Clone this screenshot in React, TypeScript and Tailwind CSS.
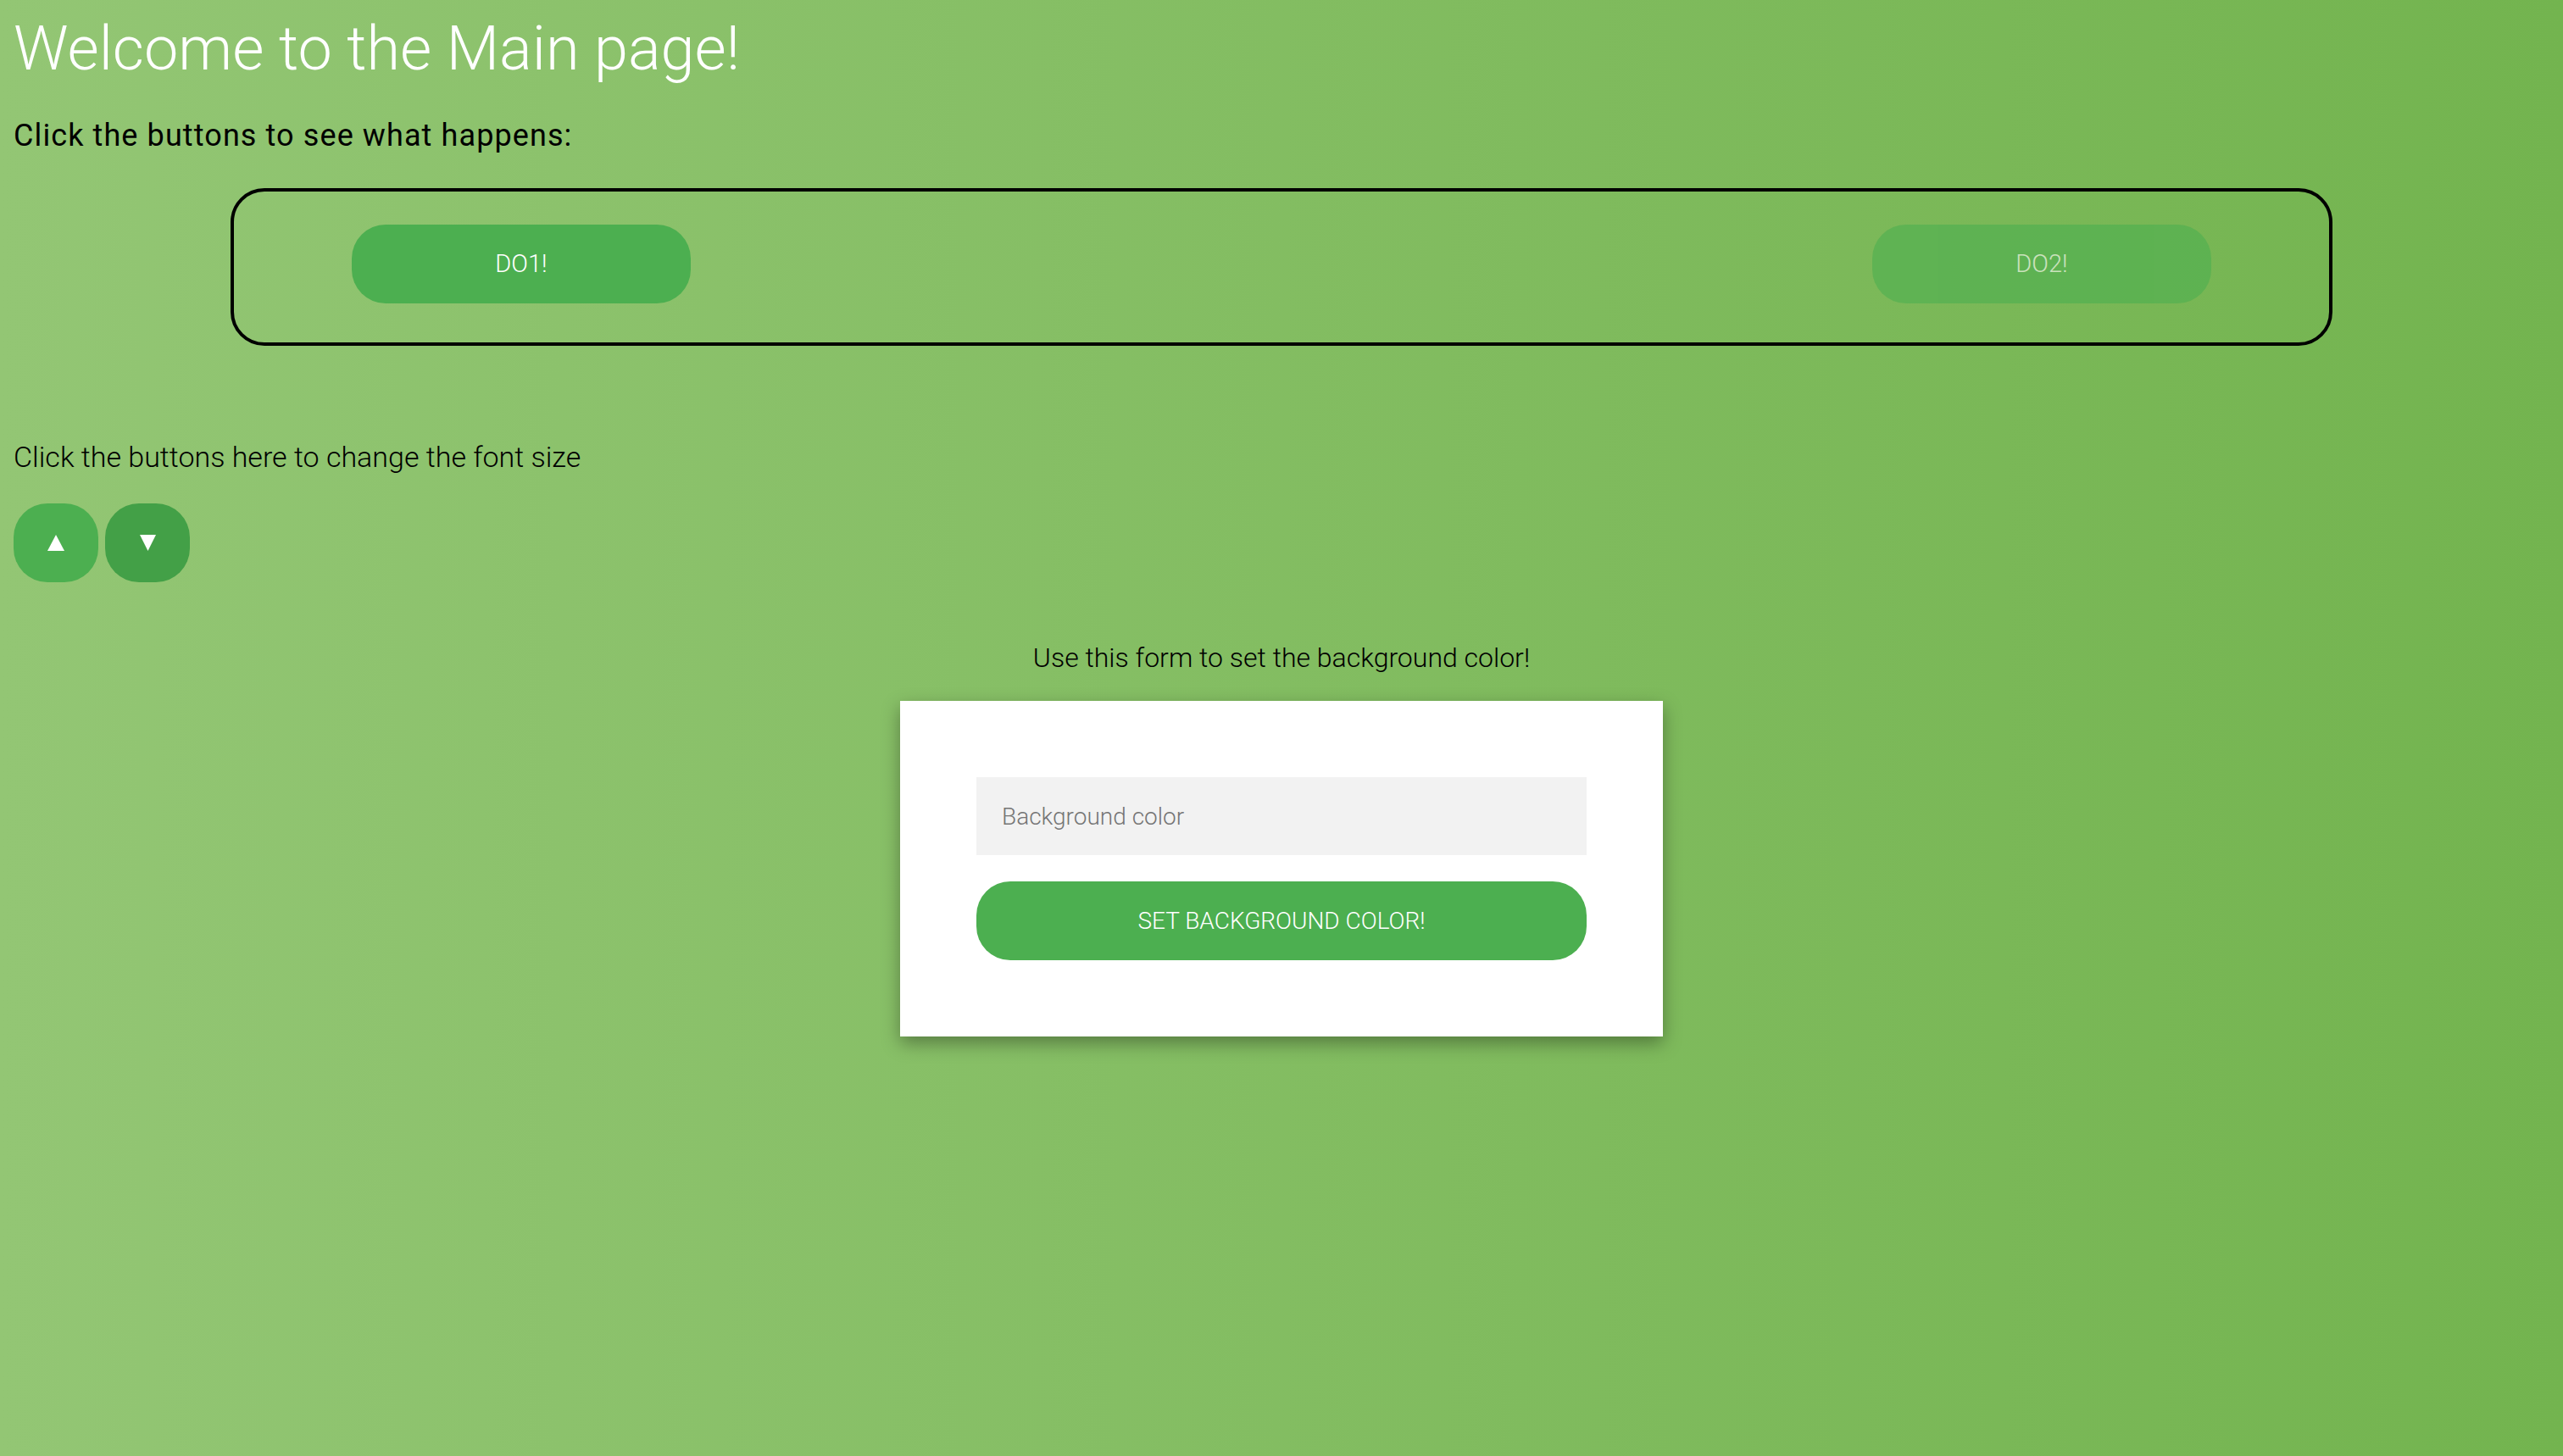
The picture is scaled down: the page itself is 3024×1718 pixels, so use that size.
import React from "react";

const font = { fontFamily: "Roboto, 'Noto Sans', sans-serif" };

export default function App() {
  return (
    <div
      className="min-h-screen w-full bg-[linear-gradient(90deg,#93c674,#73b44f)] px-4 pt-4 pb-10"
      style={font}
    >
      <h1 className="text-[72px] leading-[84px] font-light text-white">
        Welcome to the Main page!
      </h1>
      <p className="mt-[40px] text-[36px] leading-[40px] font-normal tracking-[1.1px] text-black">
        Click the buttons to see what happens:
      </p>

      <div className="mx-auto mt-[42px] flex w-[2480px] items-start justify-between rounded-[40px] border-4 border-black px-[139px] pt-[39px] pb-[46px]">
        <button className="h-[93px] w-[400px] rounded-[40px] bg-[#4caf50] text-[29px] font-light text-white">
          DO1!
        </button>
        <button className="h-[93px] w-[400px] rounded-[40px] bg-[#4caf50] text-[29px] font-light text-white opacity-60">
          DO2!
        </button>
      </div>

      <p className="mt-[111px] text-[34px] leading-[40px] font-light text-black">
        Click the buttons here to change the font size
      </p>
      <div className="mt-[35px] flex gap-2">
        <button className="flex h-[93px] w-[100px] items-center justify-center rounded-[40px] bg-[#4caf50]">
          <svg width="20" height="19" viewBox="0 0 20 19">
            <polygon points="10,0 20,19 0,19" fill="white" />
          </svg>
        </button>
        <button className="flex h-[93px] w-[100px] items-center justify-center rounded-[40px] bg-[#43a047]">
          <svg width="19" height="19" viewBox="0 0 19 19">
            <polygon points="0,0 19,0 9.5,19" fill="white" />
          </svg>
        </button>
      </div>

      <p className="mt-[69px] text-center text-[32px] leading-[40px] font-light text-black">
        Use this form to set the background color!
      </p>
      <div className="mx-auto mt-[31px] flex w-[900px] flex-col gap-[31px] bg-white p-[90px] shadow-[0_8px_20px_rgba(0,0,0,0.35)]">
        <input
          className="h-[92px] w-full bg-[#f2f2f2] px-[30px] text-[28px] font-light text-[#333] placeholder:text-[#757575] outline-none"
          placeholder="Background color"
          style={font}
        />
        <button className="h-[93px] w-full rounded-[40px] bg-[#4caf50] text-[28px] font-light text-white">
          SET BACKGROUND COLOR!
        </button>
      </div>
    </div>
  );
}
